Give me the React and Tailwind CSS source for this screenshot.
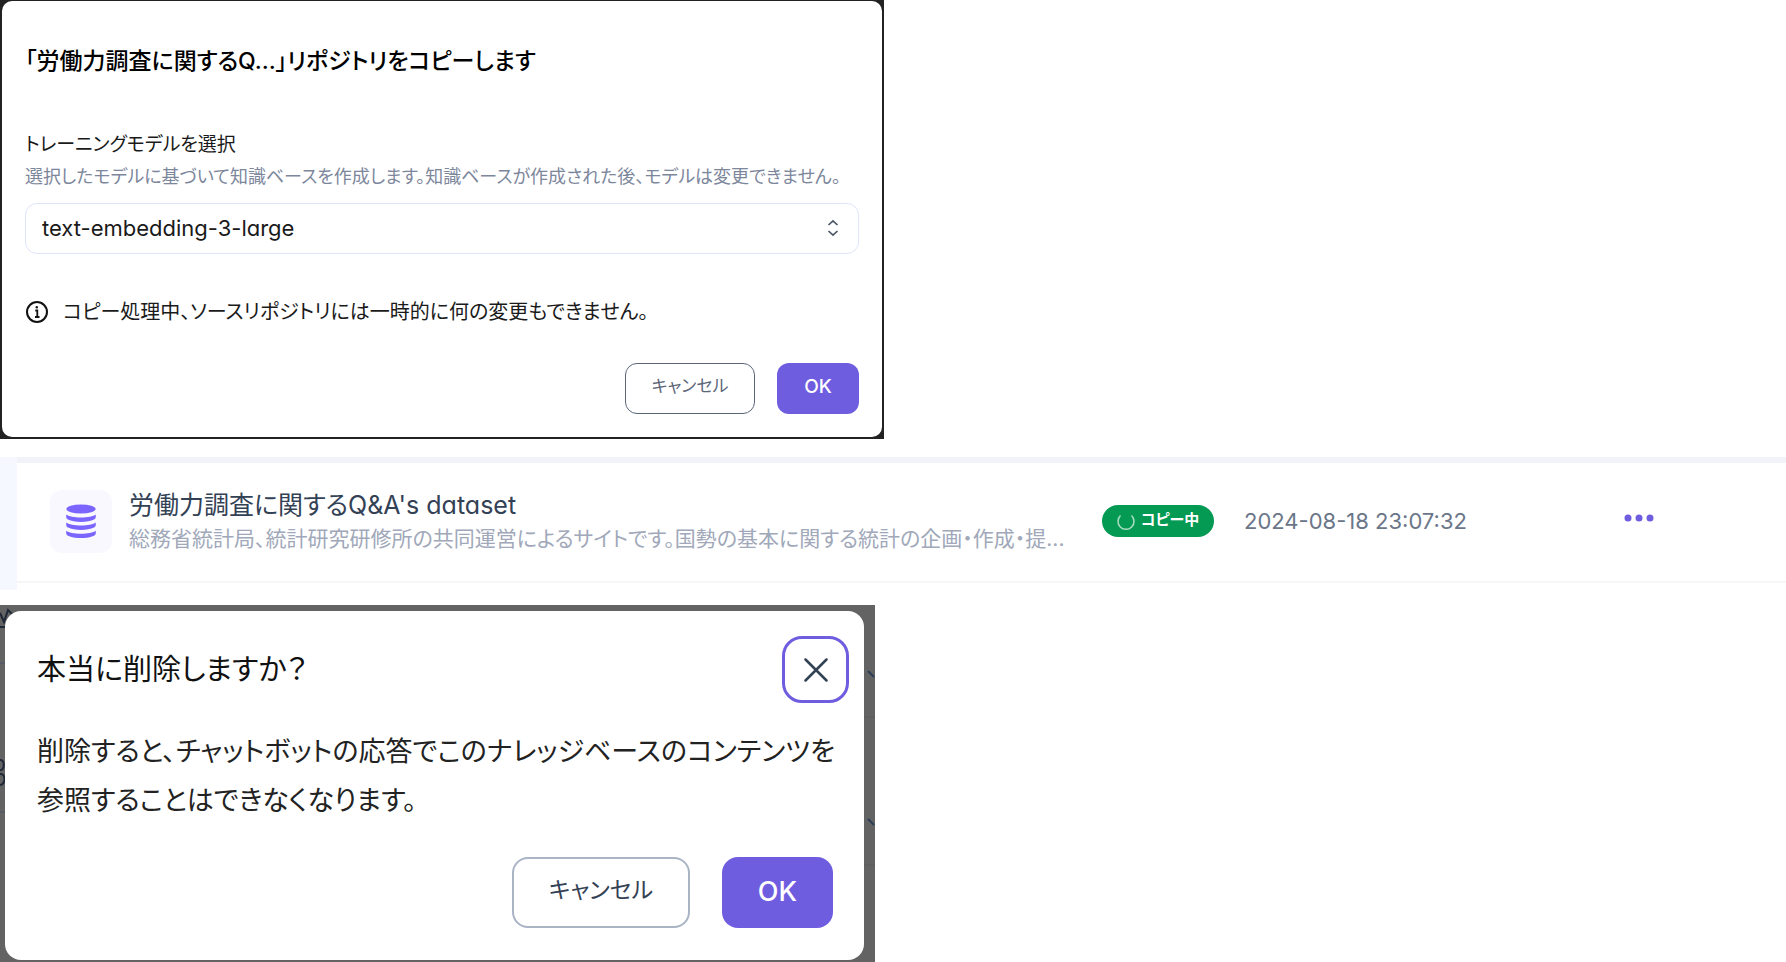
import React from "react";

const FONT =
  "font-[Inter,'Noto_Sans_CJK_JP',sans-serif] [font-feature-settings:'palt','cv11']";

function CopyDialog() {
  return (
    <section className="w-[884px] max-w-full bg-[#222] pt-px pr-0.5 pb-0.5 pl-0.5">
      <div
        role="dialog"
        aria-labelledby="copy-title"
        className="flex flex-col rounded-[10px] bg-white px-[23px] pt-[42px] pb-[23px]"
      >
        <h1 id="copy-title" className="text-[23px] leading-9 font-medium text-black">
          「労働力調査に関するQ...」リポジトリをコピーします
        </h1>
        <label
          htmlFor="model"
          className="mt-12 text-[19px] leading-9 text-[#1a1a1a]"
        >
          トレーニングモデルを選択
        </label>
        <p className="text-[18px] leading-7 text-[#7d879c]">
          選択したモデルに基づいて知識ベースを作成します。知識ベースが作成された後、モデルは変更できません。
        </p>
        <div className="relative mt-3">
          <select
            id="model"
            className="h-[51px] w-full appearance-none rounded-xl border border-[#e0e4fb] bg-white px-4 text-[22px] text-[#1a1a1a]"
          >
            <option>text-embedding-3-large</option>
          </select>
          <svg
            viewBox="0 0 12 18"
            className="pointer-events-none absolute top-4 right-5 h-[18px] w-3"
            fill="none"
            stroke="#4b5768"
            strokeWidth="1.7"
          >
            <path d="M1.5 6 6 1.8 10.500 6M1.500 12 6 16.200 10.500 12" />
          </svg>
        </div>
        <div className="mt-10 flex items-center gap-3.5 text-xl leading-9 text-[#1a1a1a]">
          <svg viewBox="0 0 24 24" className="size-6" fill="none" stroke="#111" strokeWidth="2">
            <circle cx="12" cy="12" r="10" />
            <path d="M12.300 17v-6.500h-2M10 17h4.500" strokeWidth="1.800" />
            <circle cx="11.800" cy="7.300" r="1.200" fill="#111" stroke="none" />
          </svg>
          <p>コピー処理中、ソースリポジトリには一時的に何の変更もできません。</p>
        </div>
        <div className="mt-[33px] flex justify-end gap-[22px]">
          <button className="h-[51px] w-[130px] rounded-xl border border-[#5b6678] pb-1 text-[17px] text-[#5b6678]">
            キャンセル
          </button>
          <button className="h-[51px] w-[82px] rounded-xl bg-[#6f5de0] pb-0.5 text-[19px] font-medium text-white">
            OK
          </button>
        </div>
      </div>
    </section>
  );
}

function DatasetRow() {
  return (
    <section className="mt-[18px] border-l-[17px] border-[#f6f8ff]">
      <div className="flex h-[126px] items-center border-t-[6px] border-b-2 border-t-[#f1f3f9] border-b-[#f6f6f7] pb-0.5 pl-[33px]">
        <div className="grid h-[63px] w-[62px] place-items-center rounded-xl bg-[#faf8ff]">
          <svg viewBox="0 0 30 34" className="h-[34px] w-[30px]" fill="#7a66ff">
            <ellipse cx="15" cy="5" rx="14.600" ry="4.500" />
            <path d="M.4 10.500c4 4 25.200 4 29.200 0 .6 2 .2 4-1.600 5-6 3.200-20 3.200-26 0-1.800-1-2.200-3-1.600-5z" />
            <path d="M.4 18.600c4 4 25.200 4 29.200 0 .6 2 .2 4-1.600 5-6 3.200-20 3.200-26 0-1.800-1-2.200-3-1.600-5z" />
            <path d="M.4 26.700c4 4 25.200 4 29.200 0 .6 2 .2 4-1.600 5-6 3.200-20 3.200-26 0-1.800-1-2.200-3-1.600-5z" />
          </svg>
        </div>
        <div className="ml-[17px] w-[973px]">
          <h2 className="text-[25px] leading-9 text-[#334155]">
            労働力調査に関するQ&amp;A's dataset
          </h2>
          <p className="text-[21px] leading-8 whitespace-nowrap text-[#a0a8b9]">
            総務省統計局、統計研究研修所の共同運営によるサイトです。国勢の基本に関する統計の企画・作成・提...
          </p>
        </div>
        <span className="flex h-8 w-[112px] items-center justify-center gap-1.5 rounded-full bg-[#059a54] pb-0.5 text-[15px] font-bold text-white">
          <svg viewBox="0 0 18 18" className="mt-1 size-[18px]" fill="none" stroke="#a9dfc3" strokeWidth="1.500">
            <path d="M3.500 2.500A8 8 0 1 0 14.500 2.500" />
          </svg>
          コピー中
        </span>
        <time className="ml-[30px] w-[220px] text-[22px] whitespace-nowrap text-[#6b7689]">
          2024-08-18 23:07:32
        </time>
        <button aria-label="メニュー" className="ml-40 pb-1.5">
          <svg viewBox="0 0 30 8" className="h-2 w-[30px]" fill="#6f5de0">
            <circle cx="4" cy="4" r="3.500" />
            <circle cx="15" cy="4" r="3.500" />
            <circle cx="26" cy="4" r="3.500" />
          </svg>
        </button>
      </div>
      <div className="h-[7px]" />
    </section>
  );
}

// Page content that shows dimly around the edges of the dialog.
function DimmedPage() {
  return (
    <svg
      aria-hidden="true"
      viewBox="0 0 875 357"
      className="absolute top-0 left-0 h-[357px] w-[875px]"
      fill="none"
      stroke="#1d2738"
      strokeWidth="2"
    >
      <path d="M0 8l4 9 4-12 5 5M0 22h6" />
      <path d="M0 155c5-1 5 11 0 10M0 180c6-1 6-12 0-11" />
      <path d="M0 58h5M0 207h5" stroke="#4a5568" strokeWidth="1" />
      <path d="M868 66l6 6M868 214l6 6" stroke="#2c3d57" />
      <path d="M864 112h11M864 260h11" stroke="#5c5c5c" strokeWidth="1" />
    </svg>
  );
}

function DeleteDialog() {
  return (
    <section className="relative mt-[15px] w-[875px] max-w-full overflow-hidden bg-[#636363] pt-1.5 pr-[11px] pb-[3px] pl-[5px]">
      <DimmedPage />
      <div
        role="dialog"
        aria-labelledby="delete-title"
        className="relative rounded-2xl bg-white pt-[25px] pr-[15px] pb-8 pl-8"
      >
        <div className="flex items-center justify-between">
          <h2 id="delete-title" className="text-[29px] leading-10 text-[#111]">
            本当に削除しますか？
          </h2>
          <button
            aria-label="閉じる"
            className="grid size-[67px] place-items-center rounded-[20px] border-[3px] border-[#6f5de0]"
          >
            <svg viewBox="0 0 24 24" className="size-6" fill="none" stroke="#334155" strokeWidth="2.500" strokeLinecap="round">
              <path d="M1.500 1.500l21 21M22.500 1.500l-21 21" />
            </svg>
          </button>
        </div>
        <p className="mt-6 text-[27px] leading-[49px] whitespace-nowrap text-[#222]">
          削除すると、チャットボットの応答でこのナレッジベースのコンテンツを
          <br />
          参照することはできなくなります。
        </p>
        <div className="mt-8 mr-4 flex justify-end gap-8">
          <button className="h-[71px] w-[178px] rounded-2xl border-2 border-[#a9b4c5] pb-1 text-[23px] text-[#334155]">
            キャンセル
          </button>
          <button className="h-[71px] w-[111px] rounded-2xl bg-[#6f5de0] text-[27px] font-medium text-white">
            OK
          </button>
        </div>
      </div>
    </section>
  );
}

export default function App() {
  return (
    <main className={`${FONT} bg-white`}>
      <CopyDialog />
      <DatasetRow />
      <DeleteDialog />
    </main>
  );
}
